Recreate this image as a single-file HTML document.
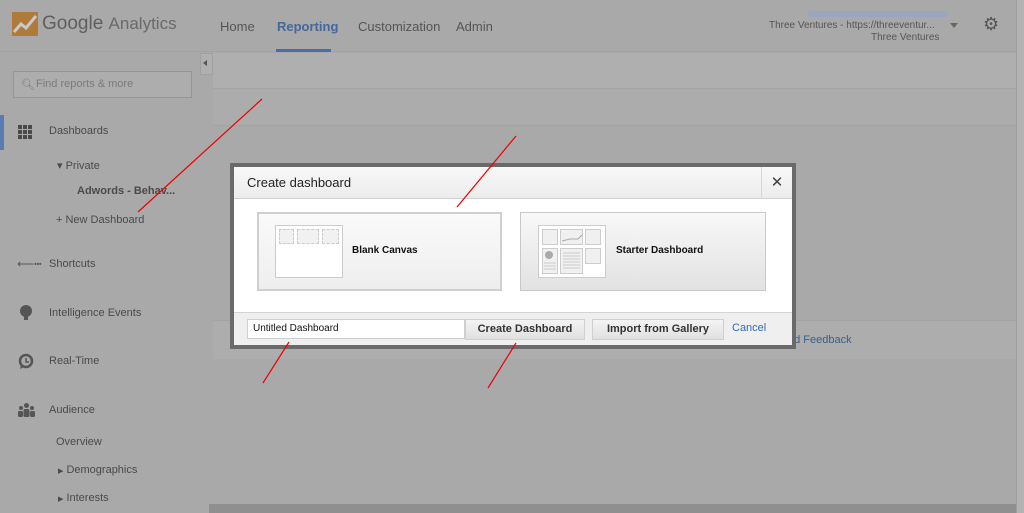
<!DOCTYPE html>
<html><head><style>
*{margin:0;padding:0;box-sizing:border-box}
body{width:1024px;height:513px;overflow:hidden;background:#a9a9a9;font-family:"Liberation Sans",sans-serif;position:relative;color:#4a4a4a}
.a{position:absolute;white-space:nowrap}
</style></head><body>
<!-- header -->
<div class="a" style="left:0;top:0;width:1024px;height:52px;background:#a9a9a9;border-bottom:1px solid #a2a2a2"></div>
<svg class="a" style="left:12px;top:12px" width="26" height="24"><rect width="26" height="24" fill="#b07a3a"/><polyline points="2,20 9,12 14,16 24,4" stroke="#c9c9c9" stroke-width="3" fill="none"/></svg>
<div class="a" style="left:42px;top:13px;font-size:19px;color:#5f5f5f">Google <span style="font-size:17px;color:#6a6a6a">Analytics</span></div>
<div class="a" style="left:220px;top:19px;font-size:13px;color:#555">Home</div>
<div class="a" style="left:277px;top:19px;font-size:13px;color:#44679e;font-weight:bold">Reporting</div>
<div class="a" style="left:276px;top:49px;width:55px;height:3px;background:#4a6fa8"></div>
<div class="a" style="left:358px;top:19px;font-size:13px;color:#555">Customization</div>
<div class="a" style="left:456px;top:19px;font-size:13px;color:#555">Admin</div>
<div class="a" style="left:808px;top:11px;width:140px;height:6px;background:#9aa6bf;border-radius:3px"></div>
<div class="a" style="left:769px;top:20px;font-size:10px;color:#555">Three Ventures - https://threeventur...</div>
<div class="a" style="left:950px;top:23px;border:4px solid transparent;border-top:5px solid #666"></div>
<div class="a" style="left:871px;top:32px;font-size:10px;color:#555">Three Ventures</div>
<div class="a" style="left:983px;top:14px;font-size:18px;color:#555">⚙</div>
<!-- sidebar -->
<div class="a" style="left:200px;top:53px;width:13px;height:22px;background:#b0b0b0;border:1px solid #a0a0a0"></div>
<div class="a" style="left:203px;top:60px;border:3px solid transparent;border-right:4px solid #555;border-left:0"></div>
<div class="a" style="left:13px;top:71px;width:179px;height:27px;border:1px solid #959595;background:#adadad"></div>
<div class="a" style="left:21px;top:78px;font-size:11px;color:#777">🔍︎</div>
<div class="a" style="left:36px;top:78px;font-size:11px;color:#7a7a7a">Find reports &amp; more</div>
<div class="a" style="left:0;top:115px;width:4px;height:35px;background:#5b7cb3"></div>
<svg class="a" style="left:18px;top:125px" width="15" height="15" fill="#4a4a4a"><rect x="0" y="0" width="4" height="4"/><rect x="5" y="0" width="4" height="4"/><rect x="10" y="0" width="4" height="4"/><rect x="0" y="5" width="4" height="4"/><rect x="5" y="5" width="4" height="4"/><rect x="10" y="5" width="4" height="4"/><rect x="0" y="10" width="4" height="4"/><rect x="5" y="10" width="4" height="4"/><rect x="10" y="10" width="4" height="4"/></svg>
<div class="a" style="left:49px;top:125px;font-size:11px">Dashboards</div>
<div class="a" style="left:57px;top:159px;font-size:11px">▾ Private</div>
<div class="a" style="left:77px;top:185px;font-size:11px;font-weight:bold">Adwords - Behav...</div>
<div class="a" style="left:56px;top:214px;font-size:11px">+ New Dashboard</div>
<div class="a" style="left:17px;top:257px;font-size:12px;color:#555">⟵┅</div>
<div class="a" style="left:49px;top:258px;font-size:11px">Shortcuts</div>
<svg class="a" style="left:19px;top:305px" width="14" height="18"><circle cx="7" cy="6" r="6" fill="#555"/><rect x="5" y="11" width="4" height="4" fill="#555"/></svg>
<div class="a" style="left:49px;top:307px;font-size:11px">Intelligence Events</div>
<svg class="a" style="left:18px;top:353px" width="16" height="18"><circle cx="8" cy="8" r="6" stroke="#555" stroke-width="2.5" fill="none"/><path d="M8 5v4h3" stroke="#555" stroke-width="1.5" fill="none"/><path d="M3 12l-1 4 4-2" fill="#555"/></svg>
<div class="a" style="left:49px;top:355px;font-size:11px">Real-Time</div>
<svg class="a" style="left:17px;top:403px" width="19" height="14" fill="#555"><circle cx="9.5" cy="2.5" r="2.5"/><circle cx="4" cy="5" r="2"/><circle cx="15" cy="5" r="2"/><rect x="6.5" y="6" width="6" height="8" rx="1.5"/><rect x="1" y="8" width="5" height="6" rx="1.5"/><rect x="13" y="8" width="5" height="6" rx="1.5"/></svg>
<div class="a" style="left:49px;top:404px;font-size:11px">Audience</div>
<div class="a" style="left:56px;top:436px;font-size:11px">Overview</div>
<div class="a" style="left:58px;top:464px;font-size:11px"><span style="font-size:7px">▶</span> Demographics</div>
<div class="a" style="left:58px;top:492px;font-size:11px"><span style="font-size:7px">▶</span> Interests</div>
<!-- content -->
<div class="a" style="left:213px;top:53px;width:803px;height:36px;background:#afafaf;border-bottom:1px solid #a3a3a3"></div>
<div class="a" style="left:213px;top:90px;width:803px;height:36px;background:#acacac;border-bottom:1px solid #a3a3a3"></div>
<div class="a" style="left:213px;top:320px;width:803px;height:39px;background:#adadad;border-top:1px solid #a3a3a3"></div>
<div class="a" style="left:788px;top:334px;font-size:11px;color:#35608f">nd Feedback</div>
<div class="a" style="left:209px;top:504px;width:807px;height:9px;background:#8f8f8f"></div>
<div class="a" style="left:1016px;top:0;width:8px;height:513px;background:#b3b3b3;border-left:1px solid #9d9d9d"></div>
<!-- dialog -->
<div class="a" style="left:230px;top:163px;width:566px;height:186px;background:#6a6a6a"></div>
<div class="a" style="left:234px;top:167px;width:558px;height:178px;background:#fff"></div>
<div class="a" style="left:234px;top:167px;width:558px;height:32px;background:linear-gradient(#f8f8f8,#ececec);border-bottom:1px solid #d0d0d0"></div>
<div class="a" style="left:247px;top:175px;font-size:13px;color:#222">Create dashboard</div>
<div class="a" style="left:761px;top:167px;width:31px;height:32px;border-left:1px solid #d6d6d6;font-size:15px;text-align:center;line-height:32px;color:#444">✕</div>
<div class="a" style="left:257px;top:212px;width:245px;height:79px;background:linear-gradient(#fafafa,#eeeeee);border:2px solid #cfcfcf"></div>
<div class="a" style="left:275px;top:225px;width:68px;height:53px;background:#fff;border:1px solid #ccc"></div>
<div class="a" style="left:279px;top:229px;width:15px;height:15px;border:1px dashed #ccc;background:#f1f1f1"></div>
<div class="a" style="left:297px;top:229px;width:22px;height:15px;border:1px dashed #ccc;background:#f1f1f1"></div>
<div class="a" style="left:322px;top:229px;width:17px;height:15px;border:1px dashed #ccc;background:#f1f1f1"></div>
<div class="a" style="left:352px;top:245px;font-size:10px;font-weight:bold;color:#111">Blank Canvas</div>
<div class="a" style="left:520px;top:212px;width:246px;height:79px;background:linear-gradient(#f8f8f8,#e2e2e2);border:1px solid #c8c8c8"></div>
<svg class="a" style="left:538px;top:225px" width="68" height="53"><rect x=".5" y=".5" width="67" height="52" fill="#fff" stroke="#ccc"/><g fill="#f0f0f0" stroke="#ccc"><rect x="4.5" y="4.5" width="15" height="15"/><rect x="22.5" y="4.5" width="22" height="15"/><rect x="47.5" y="4.5" width="15" height="15"/><rect x="4.5" y="23.5" width="15" height="25"/><rect x="22.5" y="23.5" width="22" height="25"/><rect x="47.5" y="23.5" width="15" height="15"/></g><path d="M24 16l8-2 8 0 4-4" stroke="#aaa" fill="none"/><circle cx="11" cy="30" r="4" fill="#aaa"/><g stroke="#ccc"><path d="M25 28h17M25 31h17M25 34h17M25 37h17M25 40h17M25 43h17M6 38h12M6 41h12M6 44h12"/></g></svg>
<div class="a" style="left:616px;top:245px;font-size:10px;font-weight:bold;color:#111">Starter Dashboard</div>
<div class="a" style="left:234px;top:312px;width:558px;height:33px;background:#efefef;border-top:1px solid #d4d4d4"></div>
<div class="a" style="left:247px;top:319px;width:218px;height:20px;background:#fff;border:1px solid #cfcfcf;font-size:10px;line-height:18px;padding-left:5px;color:#111">Untitled Dashboard</div>
<div class="a" style="left:465px;top:319px;width:120px;height:21px;background:linear-gradient(#f4f4f4,#e0e0e0);border:1px solid #cfcfcf;font-size:11px;font-weight:bold;line-height:19px;text-align:center;color:#333">Create Dashboard</div>
<div class="a" style="left:592px;top:319px;width:132px;height:21px;background:linear-gradient(#f4f4f4,#e0e0e0);border:1px solid #cfcfcf;font-size:11px;font-weight:bold;line-height:19px;text-align:center;color:#333">Import from Gallery</div>
<div class="a" style="left:732px;top:322px;font-size:11px;color:#2b6fb8">Cancel</div>
<!-- arrows -->
<svg class="a" style="left:0;top:0" width="1024" height="513"><g stroke="#e00" stroke-width="1.2" fill="#e00"><line x1="262" y1="99" x2="138" y2="212"/><line x1="516" y1="136" x2="457" y2="207"/><line x1="263" y1="383" x2="289" y2="342"/><line x1="488" y1="388" x2="516" y2="343"/></g></svg>
</body></html>
